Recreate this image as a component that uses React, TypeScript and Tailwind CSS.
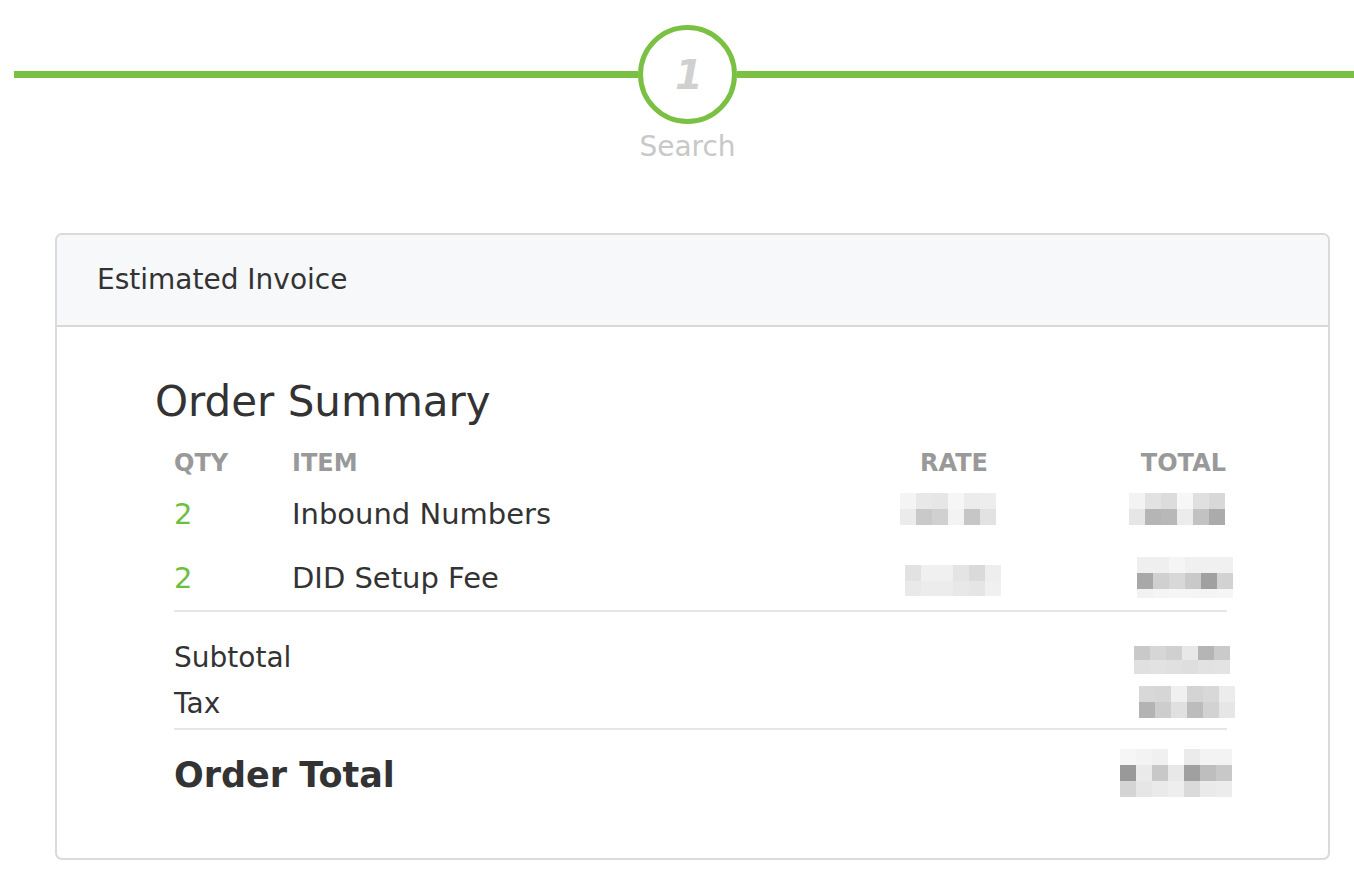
import React from 'react'

type Blob = { rows: string[][]; h?: number[] }

const RATE_1: Blob = {
  rows: [
    ['#f4f4f4', '#e8e8e8', '#e6e6e6', '#f6f6f6', '#ececec', '#ededed'],
    ['#ebebeb', '#c9c9c9', '#d0d0d0', '#f3f3f3', '#c6c6c6', '#e2e2e2'],
  ],
}
const TOTAL_1: Blob = {
  rows: [
    ['#f3f3f3', '#e2e2e2', '#dcdcdc', '#f7f7f7', '#e0e0e0', '#d8d8d8'],
    ['#e6e6e6', '#b5b5b5', '#b8b8b8', '#ececec', '#c2c2c2', '#ababab'],
  ],
}
const RATE_2: Blob = {
  rows: [
    ['#e2e2e2', '#f0f0f0', '#f0f0f0', '#e4e4e4', '#dadada', '#eeeeee'],
    ['#e9e9e9', '#ececec', '#ececec', '#e8e8e8', '#e5e5e5', '#f0f0f0'],
  ],
  h: [16, 15],
}
const TOTAL_2: Blob = {
  rows: [
    ['#efefef', '#efefef', '#f5f5f5', '#f0f0f0', '#f0f0f0', '#f0f0f0'],
    ['#a8a8a8', '#d0d0d0', '#d8d8d8', '#c9c9c9', '#a0a0a0', '#d2d2d2'],
    ['#f2f2f2', '#f5f5f5', '#f6f6f6', '#f5f5f5', '#f4f4f4', '#f6f6f6'],
  ],
  h: [16, 16, 9],
}
const SUBTOTAL: Blob = {
  rows: [
    ['#c9c9c9', '#d6d6d6', '#d0d0d0', '#e8e8e8', '#b5b5b5', '#cacaca'],
    ['#e0e0e0', '#e2e2e2', '#e0e0e0', '#dedede', '#e2e2e2', '#e3e3e3'],
  ],
  h: [14, 14],
}
const TAX: Blob = {
  rows: [
    ['#d8d8d8', '#d6d6d6', '#f0f0f0', '#d4d4d4', '#d8d8d8', '#ececec'],
    ['#b3b3b3', '#cdcdcd', '#e0e0e0', '#bcbcbc', '#d2d2d2', '#e6e6e6'],
  ],
}
const ORDER_TOTAL: Blob = {
  rows: [
    ['#f6f6f6', '#f3f3f3', '#f0f0f0', '#ffffff', '#ebebeb', '#f3f3f3', '#f3f3f3'],
    ['#999999', '#eaeaea', '#c8c8c8', '#e8e8e8', '#a0a0a0', '#bebebe', '#c8c8c8'],
    ['#d4d4d4', '#e6e6e6', '#eaeaea', '#eeeeee', '#dadada', '#eaeaea', '#ececec'],
  ],
}

// redacted amount, drawn as a block of grey pixels
function Pixelated({ blob, className = '' }: { blob: Blob; className?: string }) {
  return (
    <div className={`flex flex-col ${className}`}>
      {blob.rows.map((row, r) => (
        <div key={r} className="flex">
          {row.map((c, i) => (
            <div key={i} className="w-[16px]" style={{ background: c, height: blob.h?.[r] ?? 16 }} />
          ))}
        </div>
      ))}
    </div>
  )
}

const ITEMS = [
  { qty: 2, item: 'Inbound Numbers', rate: RATE_1, total: TOTAL_1, rateCls: 'mr-[4px] -mt-[4px]', totalCls: 'mr-[2px] -mt-[4px]' },
  { qty: 2, item: 'DID Setup Fee', rate: RATE_2, total: TOTAL_2, rateCls: '-mr-[1px] mt-[4px]', totalCls: '-mr-[6px] -mt-[4px]' },
]

export default function App() {
  return (
    <div className="min-h-[886px] bg-white font-['DejaVu_Sans',sans-serif] text-[#333333]">
      {/* stepper */}
      <div className="flex pl-[14px] pt-[25px]">
        <div className="mt-[46px] h-[7px] w-[624px] bg-[#7ac143]" />
        <div className="flex w-[99px] flex-col items-center">
          <div className="flex h-[99px] w-[99px] items-center justify-center rounded-full border-[5px] border-[#7ac143] bg-white">
            <span className="ml-[3px] text-[40px] font-bold italic leading-none text-[#d0d0d0]">1</span>
          </div>
          <div className="mt-[6px] whitespace-nowrap text-[28px] leading-[34px] text-[#c8c8c8]">Search</div>
        </div>
        <div className="mt-[46px] h-[7px] flex-1 bg-[#7ac143]" />
      </div>

      {/* invoice card */}
      <div className="ml-[55px] mt-[69px] w-[1275px] rounded-[7px] border-2 border-[#dadada]">
        <div className="flex h-[92px] items-center rounded-t-[6px] border-b-2 border-[#d8d8d8] bg-[#f7f8f9] pl-[40px]">
          <h2 className="text-[28px] leading-[34px]">Estimated Invoice</h2>
        </div>

        <div className="pb-[63px] pl-[98px] pt-[50px]">
          <h1 className="text-[42px] leading-[50px]">Order Summary</h1>

          <div className="ml-[19px] w-[1053px]">
            <div className="mt-[22px] flex text-[24px] font-bold leading-[28px] text-[#999999]">
              <div className="w-[118px]">QTY</div>
              <div className="flex-1">ITEM</div>
              <div className="w-[200px] pr-[12px] text-right">RATE</div>
              <div className="w-[227px] pr-[1px] text-right">TOTAL</div>
            </div>

            {ITEMS.map((r, i) => (
              <div key={r.item} className={`flex h-[34px] items-start text-[29px] leading-[34px] ${i === 0 ? 'mt-[20px]' : 'mt-[30px]'}`}>
                <div className="w-[118px] text-[#6fbe3f]">{r.qty}</div>
                <div className="flex-1">{r.item}</div>
                <div className="flex w-[200px] justify-end">
                  <Pixelated blob={r.rate} className={r.rateCls} />
                </div>
                <div className="flex w-[227px] justify-end">
                  <Pixelated blob={r.total} className={r.totalCls} />
                </div>
              </div>
            ))}

            <div className="mt-[15px] h-[2px] bg-[#e6e6e6]" />

            <div className="mt-[29px] flex h-[34px] items-start text-[28px] leading-[34px]">
              <div className="flex-1">Subtotal</div>
              <Pixelated blob={SUBTOTAL} className="-mr-[3px] mt-[5px]" />
            </div>
            <div className="mt-[12px] flex h-[34px] items-start text-[28px] leading-[34px]">
              <div className="flex-1">Tax</div>
              <Pixelated blob={TAX} className="-mr-[8px] -mt-[1px]" />
            </div>

            <div className="mt-[7px] h-[2px] bg-[#e6e6e6]" />

            <div className="mt-[25px] flex h-[40px] items-start text-[35px] font-bold leading-[40px]">
              <div className="flex-1">Order Total</div>
              <Pixelated blob={ORDER_TOTAL} className="-mr-[5px] -mt-[6px]" />
            </div>
          </div>
        </div>
      </div>
    </div>
  )
}
